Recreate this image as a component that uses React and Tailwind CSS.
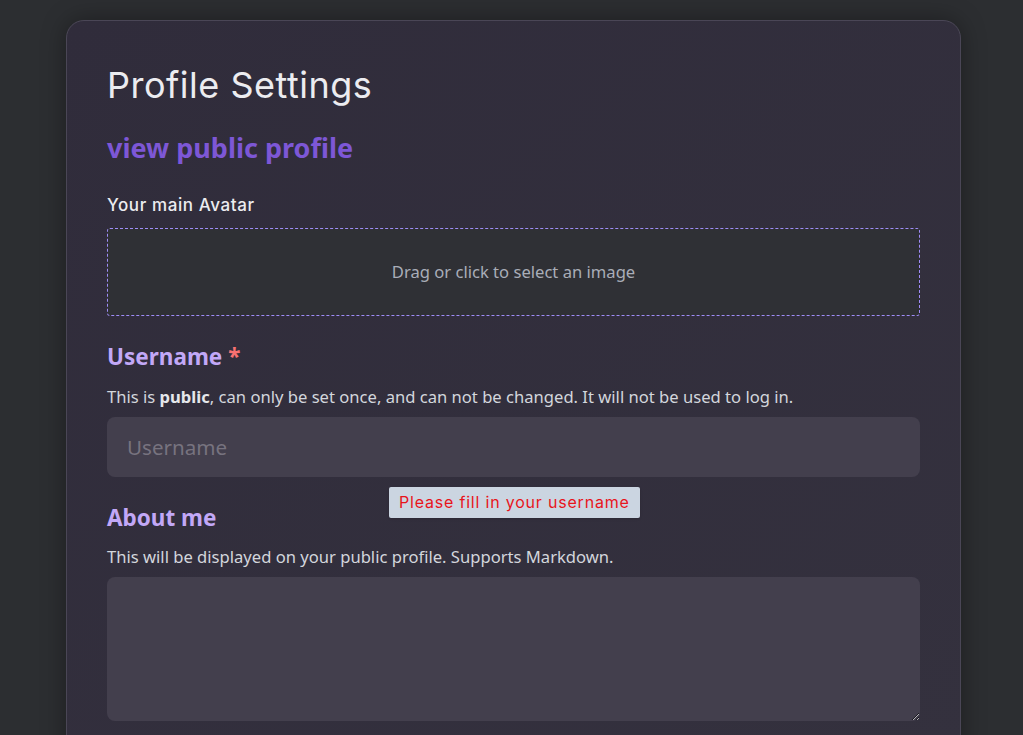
import React from "react";

export default function App() {
  const body = { fontFamily: "'Noto Sans', Lato, sans-serif" };
  const disp = { fontFamily: "Inter, 'DejaVu Sans', sans-serif" };
  return (
    <div className="min-h-[735px] w-full bg-[#2c2e31] overflow-hidden" style={body}>
      <div className="mx-[66px] mt-[20px] w-[895px] rounded-[18px] border border-[#4a4656] bg-gradient-to-br from-[#302c3b] to-[#34313e] px-[40px] pt-[40px] pb-[40px] shadow-[0_0_24px_rgba(0,0,0,0.35)]">
        <h1 className="text-[36px] leading-[48px] text-[#ececf0] tracking-[0.5px]" style={disp}>
          Profile Settings
        </h1>
        <a className="mt-[22px] block text-[27px] leading-[34px] font-bold text-[#7d57d6]">view public profile</a>
        <div className="mt-[30px] text-[17px] leading-[20px] font-medium tracking-[0.6px] text-[#ececf0]" style={disp}>
          Your main Avatar
        </div>
        <div className="mt-[13px] flex h-[88px] items-center justify-center rounded-[3px] border border-dashed border-[#9f8cf7] bg-[#2f3035] text-[16.6px] text-[#a9adb8]">
          Drag or click to select an image
        </div>
        <div className="mt-[26px] text-[22.5px] leading-[30px] font-bold text-[#c2a8f7]">
          Username <span className="text-[#f87171]">*</span>
        </div>
        <p className="mt-[15px] text-[16.6px] leading-[20px] text-[#d3d6dc]">
          This is <b className="text-[#e5e7eb]">public</b>, can only be set once, and can not be changed. It will not be used to log in.
        </p>
        <div className="relative mt-[10px]">
          <input
            placeholder="Username"
            className="h-[60px] w-full rounded-[8px] bg-[#433f4d] px-[20px] text-[20.6px] text-[#e5e7eb] placeholder-[#77737f] outline-none"
          />
          <div
            className="absolute left-[282px] top-[70px] rounded-[2px] bg-[#cbd5e1] px-[10px] py-[6px] text-[16px] leading-[19px] tracking-[0.8px] text-[#e8141b] shadow"
            style={disp}
          >
            Please fill in your username
          </div>
        </div>
        <div className="mt-[26px] text-[22.5px] leading-[30px] font-bold text-[#c2a8f7]">About me</div>
        <p className="mt-[14px] text-[16.6px] leading-[20px] text-[#d3d6dc]">
          This will be displayed on your public profile. Supports Markdown.
        </p>
        <textarea className="mt-[10px] block h-[144px] w-full rounded-[8px] bg-[#433f4d] px-[20px] py-[14px] text-[18px] text-[#e5e7eb] outline-none" />
      </div>
    </div>
  );
}
